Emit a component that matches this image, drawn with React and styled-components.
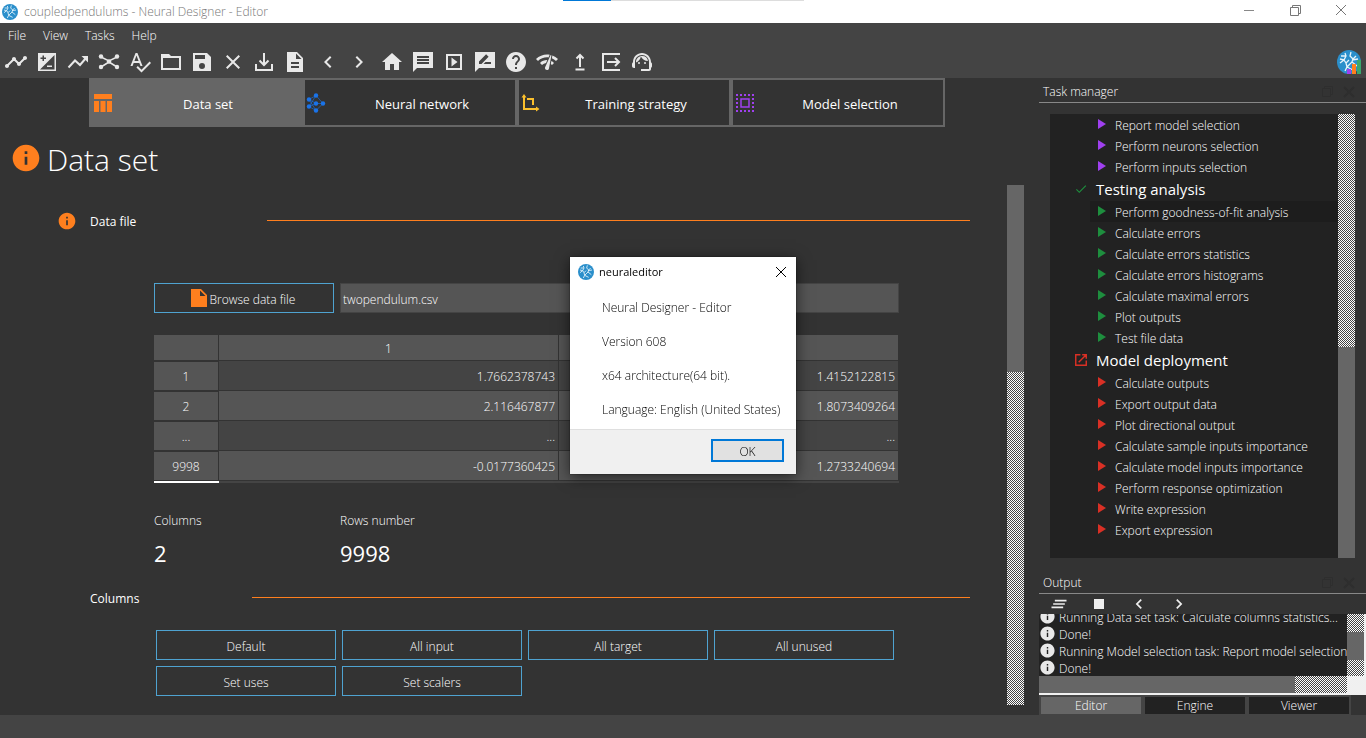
import React, { useState } from "react";
import styled, { createGlobalStyle, css } from "styled-components";
import {
  MdTimeline,
  MdSpellcheck,
  MdClose,
  MdChevronLeft,
  MdChevronRight,
  MdHome,
  MdHelp,
  MdNetworkCheck,
  MdSupportAgent,
  MdInfo,
  MdCheck,
} from "react-icons/md";

const GlobalStyle = createGlobalStyle`
  * {
    box-sizing: border-box;
  }

  body {
    margin: 0;
    background: #333;
    color: #fff;
    font-family: "Open Sans", "Noto Sans", sans-serif;
    font-size: 12px;
    font-weight: 300;
    line-height: 16px;
  }

  button, input {
    font: inherit;
    color: inherit;
    border-radius: 0;
    margin: 0;
  }

  svg {
    display: block;
    flex: none;
  }
`;

const hatch = css`
  background: repeating-conic-gradient(#fff 0 25%, #444 0 50%) 0 0 / 2px 2px;
`;

const Window = styled.div`
  min-height: 100vh;
  display: flex;
  flex-direction: column;
`;

const TitleBar = styled.header`
  position: relative;
  height: 23px;
  padding: 0 2px;
  display: flex;
  align-items: center;
  background: #fff;
  color: #777;
`;

const Title = styled.span`
  flex: 1;
  margin-left: 6px;
`;

const LoadingBar = styled.div`
  position: absolute;
  top: 0;
  left: 563px;
  width: 241px;
  height: 1px;
  background: linear-gradient(90deg, #0078d7 20%, #ddd 20%);
`;

const PlainButton = styled.button`
  padding: 0;
  border: none;
  background: none;
  display: flex;
  align-items: center;
  justify-content: center;
`;

const WindowButton = styled(PlainButton)`
  width: 46px;
  height: 20px;
  align-self: flex-start;
`;

const Bars = styled.div`
  background: #444;
  height: 55px;
`;

const Menu = styled.nav`
  display: flex;
  gap: 17px;
  padding: 5px 8px 0;
`;

const MenuItem = styled(PlainButton)`
  height: 16px;
`;

const Toolbar = styled.div`
  display: flex;
  align-items: center;
  gap: 2px;
  margin-top: 5px;
  padding-right: 5px;
  color: #e8e8e8;
`;

const ToolGroup = styled.div`
  display: flex;
`;

const Tool = styled(PlainButton)`
  width: 31px;
  height: 26px;
  padding-left: 1px;
`;

const Spacer = styled.span`
  flex: 1;
`;

const Body = styled.div`
  flex: 1;
  display: flex;
`;

const Content = styled.main`
  flex: 1;
  min-width: 0;
  display: flex;
  flex-direction: column;
`;

const Tabs = styled.div`
  display: flex;
  margin: 0 94px 0 89px;
`;

const Tab = styled.button`
  flex: 1;
  height: 49px;
  padding: 0;
  display: flex;
  align-items: center;
  border: 2px solid #666;
  background: ${props => (props.$active ? "#666" : "#333")};
  font-size: 13px;
  font-weight: 400;

  svg {
    color: ${props => props.$color};
  }

  span {
    flex: 1;
    padding-top: 2px;
    text-align: center;
  }
`;

const Heading = styled.h1`
  display: flex;
  align-items: center;
  gap: 5px;
  margin: 10px 0 6px 10px;
  height: 42px;
  font-size: 30px;
  line-height: 38px;
  font-weight: 300;

  svg {
    color: #ff7f1e;
  }

  span {
    padding-top: 4px;
  }
`;

const Scroller = styled.div`
  flex: 1;
  display: flex;
  margin: 0 15px 10px 0;
`;

const ScrollBar = styled.div`
  width: 17px;
  display: flex;
  flex-direction: column;
  ${hatch}
`;

const Thumb = styled.div`
  flex: none;
  height: ${props => props.$size};
  margin-top: ${props => props.$start || 0};
  background: #666;
`;

const Page = styled.div`
  flex: 1;
  min-width: 0;
  padding-top: 24px;
`;

const SectionHead = styled.div`
  display: flex;
  align-items: center;
  height: 24px;
  padding: 0 37px 0 57px;
  color: #ff7f1e;
`;

const SectionIcon = styled.span`
  width: 33px;
`;

const SectionTitle = styled.h2`
  width: ${props => props.$width};
  margin: 0;
  padding-top: 2px;
  color: #fff;
  font-size: 12px;
  font-weight: 400;
`;

const Rule = styled.hr`
  flex: 1;
  height: 1px;
  margin: 0 0 2px;
  border: none;
  background: #ff7f1e;
`;

const FileRow = styled.div`
  display: flex;
  gap: 6px;
  margin: 50px 108px 22px 154px;
`;

const OutlineButton = styled.button`
  width: 180px;
  height: 30px;
  padding: 4px 0 0;
  display: flex;
  align-items: center;
  justify-content: center;
  border: 1px solid #4fa3d1;
  background: #333;

  svg {
    color: #ff7f1e;
    margin: -5px -3px 0 -4px;
  }
`;

const FileInput = styled.input`
  flex: 1;
  min-width: 0;
  height: 30px;
  padding: 2px 2px 0;
  border: 1px solid #444;
  background: #555;
  outline: none;
`;

const TableBox = styled.div`
  margin: 0 108px 0 154px;
`;

const DataTable = styled.table`
  width: 100%;
  table-layout: fixed;
  border-spacing: 0;

  th, td {
    padding: 2px 0 0;
    border: 0 solid #333;
    border-right-width: 1px;
    border-bottom-width: 1px;
    font-weight: 300;
    background: #555;
  }

  thead th {
    height: 26px;
  }

  thead th:first-child {
    width: 65px;
  }

  tbody th {
    height: 30px;
    border-top-width: 1px;
  }

  td {
    padding-right: 3px;
    text-align: right;
  }

  tbody tr:nth-child(odd) td {
    background: #444;
  }
`;

const TableEdge = styled.div`
  height: 2px;
  background: linear-gradient(90deg, #fff 65px, #444 65px);
`;

const Stats = styled.dl`
  display: flex;
  gap: 6px;
  margin: 28px 0 18px 154px;

  div {
    width: 180px;
  }

  dt {
    height: 20px;
    line-height: 20px;
  }

  dd {
    margin: 7px 0 0;
    font-size: 22px;
    line-height: 30px;
    font-weight: 400;
  }
`;

const ButtonGrid = styled.div`
  display: flex;
  flex-wrap: wrap;
  gap: 6px;
  margin: 20px 100px 0 156px;
`;

const Dock = styled.aside`
  width: 327px;
  display: flex;
  flex-direction: column;
`;

const DockHead = styled.div`
  height: 25px;
  padding: 3px 7px 0 4px;
  display: flex;
  align-items: center;
  border-bottom: 1px solid #888;

  button {
    width: 21px;
    color: #2e2e2e;
  }
`;

const DockTitle = styled.h2`
  flex: 1;
  margin: 0;
  font-size: 12px;
  font-weight: 300;
`;

const TaskBox = styled.div`
  flex: 1;
  display: flex;
  margin: 11px 11px;
  background: #222;
`;

const TaskList = styled.ul`
  flex: 1;
  margin: 0;
  padding: 0;
  list-style: none;
`;

const Task = styled.li`
  display: flex;
  align-items: center;
  height: 21px;
  margin-left: 40px;
  padding-left: 8px;
  background: ${props => (props.$selected ? "#1d1d1d" : "none")};

  svg {
    color: ${props => props.$color};
    margin: 0 9px 2px 0;
  }

  button {
    padding-top: 3px;
  }
`;

const Category = styled.li`
  display: flex;
  align-items: center;
  gap: 8px;
  height: 24px;
  padding-left: 24px;
  font-size: 15px;
  font-weight: 500;

  svg {
    color: ${props => props.$color};
  }
`;

const OutputTools = styled.div`
  display: flex;
  height: 20px;
  color: #eee;

  button {
    width: 40px;
    height: 20px;
  }
`;

const OutputBox = styled.div`
  display: grid;
  grid-template-columns: 1fr 17px;
  grid-template-rows: 62px 17px;
  border: solid #f0f0f0;
  border-width: 0 2px 2px 0;
  background: #f0f0f0;
`;

const Log = styled.ul`
  display: flex;
  flex-direction: column;
  justify-content: flex-end;
  min-width: 0;
  margin: 0;
  padding: 0;
  list-style: none;
  overflow: hidden;
  background: #222;
`;

const LogLine = styled.li`
  flex: none;
  display: flex;
  align-items: center;
  gap: 3px;
  height: 17px;
  white-space: nowrap;

  svg {
    color: #e8e8e8;
  }

  span {
    padding-top: 2px;
  }
`;

const HorizontalBar = styled.div`
  ${hatch}

  div {
    width: 83%;
    height: 17px;
    background: #666;
  }
`;

const ModeTabs = styled.div`
  display: flex;
  gap: 4px;
  height: 20px;
  margin-right: 15px;
  padding: 2px 2px 1px;
  background: #444;
`;

const ModeTab = styled.button`
  flex: 1;
  padding: 1px 0 0;
  border: none;
  background: ${props => (props.$active ? "#666" : "#222")};
`;

const StatusBar = styled.footer`
  height: 23px;
  background: #444;
`;

const Overlay = styled.div`
  position: fixed;
  inset: 0;
  display: grid;
  place-items: center;
  padding-bottom: 7px;
`;

const Dialog = styled.section`
  width: 226px;
  background: #fff;
  color: #000;
  box-shadow: 0 3px 14px rgba(0, 0, 0, 0.6), 0 0 1px #111;
`;

const DialogHead = styled.div`
  display: flex;
  align-items: center;
  gap: 5px;
  height: 30px;
  padding: 0 9px 0 8px;

  h2 {
    flex: 1;
    margin: 0;
    font-size: 11px;
    font-weight: 400;
  }
`;

const DialogBody = styled.div`
  padding: 13px 0 11px 32px;
  display: grid;
  gap: 18px;
  white-space: nowrap;

  p {
    margin: 0;
  }
`;

const DialogFoot = styled.div`
  display: flex;
  justify-content: flex-end;
  padding: 9px 12px 12px;
  border-top: 1px solid #dfdfdf;
  background: #f0f0f0;
`;

const OkButton = styled.button`
  width: 73px;
  height: 23px;
  padding: 2px 0 0;
  border: 2px solid #0078d7;
  background: #e1e1e1;
`;

const Icon = ({ size = 24, children }) => (
  <svg width={size} height={size} viewBox="0 0 24 24" fill="currentColor" fillRule="evenodd">
    {children}
  </svg>
);

const Line = ({ d, width = 2 }) => (
  <path d={d} fill="none" stroke="currentColor" strokeWidth={width} />
);

const Logo = ({ size, bars }) => (
  <svg width={size} height={size} viewBox="0 0 24 24">
    <circle cx="12" cy="12" r="12" fill="#2b8fcb" />
    <g fill="none" stroke="#e6f4fb" strokeWidth="1.3">
      <path d="M8 21l2-4 5-5 1-3-3-3 1-4M16 9l3-3M15 10l6-1M15 12l5 4M10 17l6 3M10 17l-1-4-2-3 2-4-1-3M7 10l-4 3M8.500 6L4 6M7 10l-4-1M9 13l3-3" />
    </g>
    {bars && (
      <g>
        <path d="M10 19h4v5h-4z" fill="#a040f0" />
        <path d="M15 14h4v10h-4z" fill="#ff7f1e" />
        <path d="M20 10h4v14h-4z" fill="#3aa76d" />
      </g>
    )}
  </svg>
);

const ExposureIcon = () => (
  <Icon>
    <path d="M3 3h18v18H3zM5.500 7.500h2v-2H9v2h2V9H9v2H7.500V9h-2zM19.500 19.500H5L19.500 5zM17 17v-1.500h-5V17z" />
  </Icon>
);

const TrendIcon = () => (
  <Icon>
    <Line d="M2.500 17.500L9 10.500l5 4.500 6-7" />
    <path d="M15.500 6H22v6.500z" />
  </Icon>
);

const GraphIcon = () => (
  <Icon>
    <Line d="M4 7l8 4 8-4M4 17l8-5 8 5" width={1.5} />
    <circle cx="12" cy="11.500" r="2.200" />
    <circle cx="4" cy="6.500" r="2.200" />
    <circle cx="20" cy="6.500" r="2.200" />
    <circle cx="4" cy="17" r="2.200" />
    <circle cx="20" cy="17" r="2.200" />
  </Icon>
);

const FolderIcon = () => (
  <Icon>
    <path d="M2 4h8l2 2h10v14H2zM4 8h16v10H4z" />
  </Icon>
);

const SaveIcon = () => (
  <Icon>
    <path d="M3 3h14l4 4v14H3zM12 19a3 3 0 100-6 3 3 0 000 6zM15 9V5H5v4z" />
  </Icon>
);

const DownloadIcon = () => (
  <Icon>
    <Line d="M4 14v6h16v-6M12 3v12M7.500 10.500L12 15l4.500-4.500" />
  </Icon>
);

const DocumentIcon = () => (
  <Icon>
    <path d="M4 2h10l6 6v14H4zM16 18v-2H8v2zM16 14v-2H8v2zM13 9V3.500L18.500 9z" />
  </Icon>
);

const MessageIcon = () => (
  <Icon>
    <path d="M2 2h20v16H6l-4 4zM18 14v-2H6v2zM18 11V9H6v2zM18 8V6H6v2z" />
  </Icon>
);

const SlideshowIcon = () => (
  <Icon>
    <Line d="M5 5h14v14H5z" />
    <path d="M9.500 7.500l6 4.500-6 4.500z" />
  </Icon>
);

const ReviewIcon = () => (
  <Icon>
    <path d="M2 2h20v16H6l-4 4zM6 14h2.500l7.100-7.200-2.500-2.500L6 11.500zM18 14v-2h-5.500l-2 2z" />
  </Icon>
);

const UploadIcon = () => (
  <Icon>
    <Line d="M12 5v12M8.500 8.500L12 5l3.500 3.500M7.500 19.500h9" />
  </Icon>
);

const ExitIcon = () => (
  <Icon>
    <Line d="M21 4H4v16h17M8 12h12M16 8l4 4-4 4" />
  </Icon>
);

const TableIcon = () => (
  <Icon>
    <path d="M3 3h18v5H3zM3 10h5v11H3zM9.500 10h5v11h-5zM16 10h5v11h-5z" />
  </Icon>
);

const NeuralIcon = () => (
  <Icon>
    <Line d="M4 8.500l7-4 7 8M4 8.500l7 4M4 15.500l7-3h7M4 15.500l7 4 7-7M4 8.500l7 11M4 15.500l7-11" width={0.6} />
    <circle cx="4" cy="8.500" r="2.200" />
    <circle cx="4" cy="15.500" r="2.200" />
    <circle cx="11" cy="4.500" r="2.200" />
    <circle cx="11" cy="12.500" r="2.200" />
    <circle cx="11" cy="19.500" r="2.200" />
    <circle cx="18" cy="12.500" r="2.200" />
  </Icon>
);

const AxesIcon = () => (
  <Icon>
    <Line d="M5 5v13h13M8 8h6v6" width={2} />
    <path d="M2.500 6.500L5 3l2.500 3.500zM17 15.500l3.500 2.500-3.500 2.500z" />
  </Icon>
);

const SelectionIcon = () => (
  <Icon>
    <path
      d="M4 4h16v16H4z"
      fill="none"
      stroke="currentColor"
      strokeWidth="2"
      strokeDasharray="2 2"
      strokeDashoffset="1"
    />
    <Line d="M8 8h8v8H8z" width={1.5} />
  </Icon>
);

const FileIcon = () => (
  <Icon>
    <path d="M2 3h10l6 6v12H2zM11 10V4.500L16.500 10z" />
  </Icon>
);

const PlayIcon = () => (
  <svg width="8" height="10" viewBox="0 0 8 10">
    <path d="M0 0l8 5-8 5z" fill="currentColor" />
  </svg>
);

const OpenIcon = () => (
  <Icon size={14}>
    <Line d="M11 3H3v18h18v-8M14 3h7v7M21 3L8 16" width={2.5} />
  </Icon>
);

const ClearIcon = () => (
  <Icon size={20}>
    <Line d="M7 8h14M5 12h14M3 16h14" />
  </Icon>
);

const RestoreIcon = () => (
  <svg width="11" height="11" viewBox="0 0 11 11" fill="none" stroke="currentColor">
    <path d="M.5 2.500h8v8h-8zM2.500 2.500v-2h8v8h-2" />
  </svg>
);

const CrossIcon = ({ width = 1 }) => (
  <svg width="12" height="12" viewBox="0 0 12 12" fill="none" stroke="currentColor">
    <path d="M1 1l10 10M11 1L1 11" strokeWidth={width} />
  </svg>
);

const toolGroups = [
  [
    ["Timeline", MdTimeline],
    ["Exposure", ExposureIcon],
    ["Trend", TrendIcon],
    ["Graph", GraphIcon],
    ["Check", MdSpellcheck],
    ["Open", FolderIcon],
    ["Save", SaveIcon],
    ["Close", MdClose],
    ["Import", DownloadIcon],
    ["Report", DocumentIcon],
  ],
  [
    ["Previous", MdChevronLeft],
    ["Next", MdChevronRight],
  ],
  [
    ["Home", MdHome],
    ["Messages", MessageIcon],
    ["Run", SlideshowIcon],
    ["Review", ReviewIcon],
    ["Help", MdHelp],
    ["Network", MdNetworkCheck],
  ],
  [
    ["Upload", UploadIcon],
    ["Exit", ExitIcon],
    ["Support", MdSupportAgent],
  ],
];

const tabs = [
  ["Data set", TableIcon, "#ff7f1e"],
  ["Neural network", NeuralIcon, "#1a73e8"],
  ["Training strategy", AxesIcon, "#fbc02d"],
  ["Model selection", SelectionIcon, "#a040f0"],
];

const rows = [
  ["1", "1.7662378743", "1.4152122815"],
  ["2", "2.116467877", "1.8073409264"],
  ["...", "...", "..."],
  ["9998", "-0.0177360425", "1.2733240694"],
];

const selectionTasks = [
  "Report model selection",
  "Perform neurons selection",
  "Perform inputs selection",
];

const testingTasks = [
  "Perform goodness-of-fit analysis",
  "Calculate errors",
  "Calculate errors statistics",
  "Calculate errors histograms",
  "Calculate maximal errors",
  "Plot outputs",
  "Test file data",
];

const deploymentTasks = [
  "Calculate outputs",
  "Export output data",
  "Plot directional output",
  "Calculate sample inputs importance",
  "Calculate model inputs importance",
  "Perform response optimization",
  "Write expression",
  "Export expression",
];

const log = [
  "Running Data set task: Calculate columns statistics...",
  "Done!",
  "Running Model selection task: Report model selection...",
  "Done!",
];

const Tasks = ({ items, color, selected }) =>
  items.map(name => (
    <Task key={name} $color={color} $selected={name === selected}>
      <PlayIcon />
      <PlainButton>{name}</PlainButton>
    </Task>
  ));

const DockHeader = ({ title }) => (
  <DockHead>
    <DockTitle>{title}</DockTitle>
    <PlainButton aria-label={"Float " + title}><RestoreIcon /></PlainButton>
    <PlainButton aria-label={"Close " + title}><CrossIcon width={2} /></PlainButton>
  </DockHead>
);

const App = () => {
  const [tab, setTab] = useState("Data set");
  const [mode, setMode] = useState("Editor");
  const [about, setAbout] = useState(true);

  return (
    <>
      <GlobalStyle />
      <Window>
        <TitleBar>
          <LoadingBar />
          <Logo size={16} />
          <Title>coupledpendulums - Neural Designer - Editor</Title>
          <WindowButton aria-label="Minimize">
            <svg width="10" height="1"><path d="M0 .5h10" stroke="#888" /></svg>
          </WindowButton>
          <WindowButton aria-label="Restore"><RestoreIcon /></WindowButton>
          <WindowButton aria-label="Close"><CrossIcon /></WindowButton>
        </TitleBar>

        <Bars>
          <Menu>
            {["File", "View", "Tasks", "Help"].map(name => (
              <MenuItem key={name}>{name}</MenuItem>
            ))}
          </Menu>
          <Toolbar>
            {toolGroups.map((group, i) => (
              <ToolGroup key={i}>
                {group.map(([name, ToolIcon]) => (
                  <Tool key={name} aria-label={name}><ToolIcon size={24} /></Tool>
                ))}
              </ToolGroup>
            ))}
            <Spacer />
            <Logo size={24} bars />
          </Toolbar>
        </Bars>

        <Body>
          <Content>
            <Tabs>
              {tabs.map(([name, TabIcon, color]) => (
                <Tab key={name} $color={color} $active={tab === name} onClick={() => setTab(name)}>
                  <TabIcon />
                  <span>{name}</span>
                </Tab>
              ))}
            </Tabs>

            <Heading><MdInfo size={32} /><span>Data set</span></Heading>

            <Scroller>
              <Page>
                <SectionHead>
                  <SectionIcon><MdInfo size={20} /></SectionIcon>
                  <SectionTitle $width="177px">Data file</SectionTitle>
                  <Rule />
                </SectionHead>

                <FileRow>
                  <OutlineButton><FileIcon />Browse data file</OutlineButton>
                  <FileInput aria-label="Data file" defaultValue="twopendulum.csv" />
                </FileRow>

                <TableBox>
                  <DataTable>
                    <thead>
                      <tr>
                        <th></th>
                        <th>1</th>
                        <th>2</th>
                      </tr>
                    </thead>
                    <tbody>
                      {rows.map(([index, first, second]) => (
                        <tr key={index}>
                          <th>{index}</th>
                          <td>{first}</td>
                          <td>{second}</td>
                        </tr>
                      ))}
                    </tbody>
                  </DataTable>
                  <TableEdge />
                </TableBox>

                <Stats>
                  <div>
                    <dt>Columns</dt>
                    <dd>2</dd>
                  </div>
                  <div>
                    <dt>Rows number</dt>
                    <dd>9998</dd>
                  </div>
                </Stats>

                <SectionHead>
                  <SectionIcon />
                  <SectionTitle $width="162px">Columns</SectionTitle>
                  <Rule />
                </SectionHead>

                <ButtonGrid>
                  {["Default", "All input", "All target", "All unused", "Set uses", "Set scalers"].map(name => (
                    <OutlineButton key={name}>{name}</OutlineButton>
                  ))}
                </ButtonGrid>
              </Page>
              <ScrollBar><Thumb $size="36%" /></ScrollBar>
            </Scroller>
          </Content>

          <Dock>
            <DockHeader title="Task manager" />
            <TaskBox>
              <TaskList>
                <Tasks items={selectionTasks} color="#a040f0" />
                <Category $color="#1e8e3e"><MdCheck size={14} />Testing analysis</Category>
                <Tasks items={testingTasks} color="#1e8e3e" selected="Perform goodness-of-fit analysis" />
                <Category $color="#d93025"><OpenIcon />Model deployment</Category>
                <Tasks items={deploymentTasks} color="#d93025" />
              </TaskList>
              <ScrollBar><Spacer /><Thumb $size="211px" /></ScrollBar>
            </TaskBox>

            <DockHeader title="Output" />
            <OutputTools>
              <PlainButton aria-label="Clear"><ClearIcon /></PlainButton>
              <PlainButton aria-label="Stop">
                <svg width="10" height="10"><path d="M0 0h10v10H0z" fill="currentColor" /></svg>
              </PlainButton>
              <PlainButton aria-label="Previous"><MdChevronLeft size={20} /></PlainButton>
              <PlainButton aria-label="Next"><MdChevronRight size={20} /></PlainButton>
            </OutputTools>
            <OutputBox>
              <Log>
                {log.map((text, i) => (
                  <LogLine key={i}><MdInfo size={17} /><span>{text}</span></LogLine>
                ))}
              </Log>
              <ScrollBar><Thumb $size="28px" $start="18px" /></ScrollBar>
              <HorizontalBar><div /></HorizontalBar>
            </OutputBox>
            <ModeTabs>
              {["Editor", "Engine", "Viewer"].map(name => (
                <ModeTab key={name} $active={mode === name} onClick={() => setMode(name)}>
                  {name}
                </ModeTab>
              ))}
            </ModeTabs>
          </Dock>
        </Body>

        <StatusBar />
      </Window>

      {about && (
        <Overlay>
          <Dialog role="dialog" aria-labelledby="about-title">
            <DialogHead>
              <Logo size={16} />
              <h2 id="about-title">neuraleditor</h2>
              <PlainButton aria-label="Close dialog" onClick={() => setAbout(false)}>
                <CrossIcon />
              </PlainButton>
            </DialogHead>
            <DialogBody>
              <p>Neural Designer - Editor</p>
              <p>Version 608</p>
              <p>x64 architecture(64 bit).</p>
              <p>Language: English (United States)</p>
            </DialogBody>
            <DialogFoot>
              <OkButton onClick={() => setAbout(false)}>OK</OkButton>
            </DialogFoot>
          </Dialog>
        </Overlay>
      )}
    </>
  );
};

export default App;
